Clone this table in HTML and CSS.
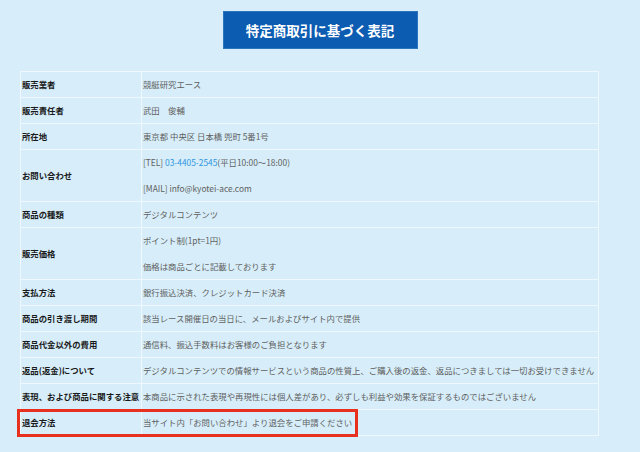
FILE: index.html
```html
<!DOCTYPE html>
<html lang="ja">
<head>
<meta charset="utf-8">
<title>特定商取引に基づく表記</title>
<link rel="stylesheet" href="styles.css">
</head>
<body>
<div class="page">
  <div class="head"><h1 class="title">特定商取引に基づく表記</h1></div>
  <table class="law">
    <tr><th>販売業者</th><td>競艇研究エース</td></tr>
    <tr><th>販売責任者</th><td>武田　俊輔</td></tr>
    <tr><th>所在地</th><td>東京都 中央区 日本橋 兜町 5番1号</td></tr>
    <tr><th>お問い合わせ</th><td><p class="line">[TEL] <a class="tel" href="#">03-4405-2545</a>(平日10:00〜18:00)</p><p class="line">[MAIL] info@kyotei-ace.com</p></td></tr>
    <tr><th>商品の種類</th><td>デジタルコンテンツ</td></tr>
    <tr><th>販売価格</th><td><p class="line">ポイント制(1pt=1円)</p><p class="line">価格は商品ごとに記載しております</p></td></tr>
    <tr><th>支払方法</th><td>銀行振込決済、クレジットカード決済</td></tr>
    <tr><th>商品の引き渡し期間</th><td>該当レース開催日の当日に、メールおよびサイト内で提供</td></tr>
    <tr><th>商品代金以外の費用</th><td>通信料、振込手数料はお客様のご負担となります</td></tr>
    <tr><th>返品(返金)について</th><td>デジタルコンテンツでの情報サービスという商品の性質上、ご購入後の返金、返品につきましては一切お受けできません</td></tr>
    <tr><th>表現、および商品に関する注意</th><td>本商品に示された表現や再現性には個人差があり、必ずしも利益や効果を保証するものではございません</td></tr>
    <tr class="marked"><th><span class="mark"></span>退会方法</th><td>当サイト内「お問い合わせ」より退会をご申請ください</td></tr>
  </table>
</div>
</body>
</html>
```
FILE: styles.css
```css
html, body {
  margin: 0;
  padding: 0;
  background: #d7eefa;
}
body {
  font-family: "Noto Sans CJK JP", "Noto Sans", sans-serif;
  width: 640px;
  height: 452px;
  overflow: hidden;
}
.page {
  padding: 11px 0 0 20px;
}
.head {
  display: flex;
  justify-content: center;
  padding-right: 20px;
  margin-bottom: 22px;
}
.title {
  margin: 0;
  width: 195px;
  height: 38px;
  box-sizing: border-box;
  background: #0c5cb2;
  border: 1px solid #2a74c0;
  color: #fff;
  font-size: 13.5px;
  font-weight: 700;
  line-height: 36px;
  text-align: center;
  letter-spacing: 0;
}
.law {
  border-collapse: collapse;
  width: 579px;
  font-size: 8.4px;
}
.law th, .law td {
  border: 1px solid #eef8fe;
  padding: 0 0 0 1px;
  height: 25px;
  line-height: 25px;
  vertical-align: middle;
  white-space: nowrap;
}
.law th {
  width: 119px;
  text-align: left;
  color: #1a1a1a;
  font-weight: 700;
}
.law td {
  color: #606060;
}
.line {
  margin: 0;
  line-height: 25.5px;
}
.tel {
  color: #2f95e0;
  text-decoration: none;
}
.marked th {
  position: relative;
}
.mark {
  position: absolute;
  left: -4px;
  top: -1px;
  width: 341px;
  height: 28px;
  box-sizing: border-box;
  border: 3px solid #e8301f;
}
```
